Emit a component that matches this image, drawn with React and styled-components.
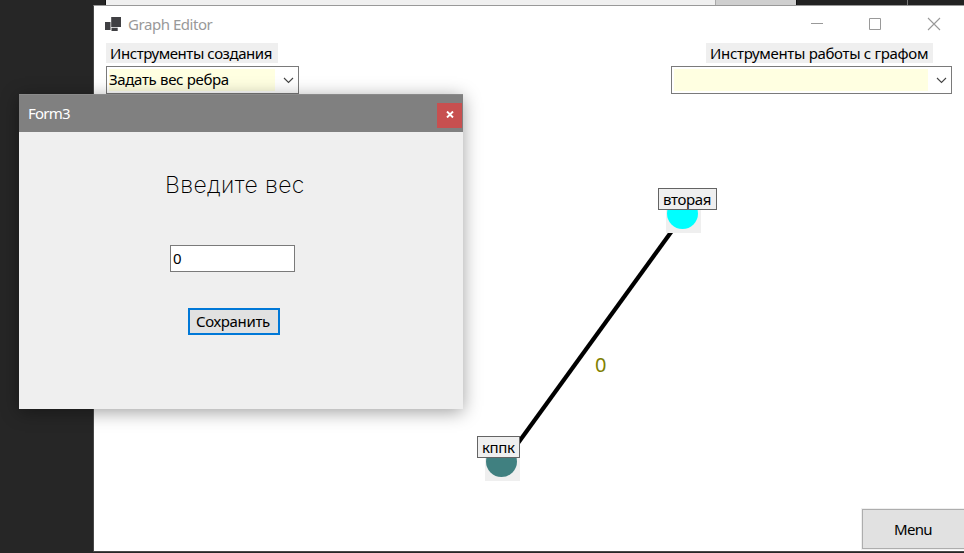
import React from 'react';
import styled, { createGlobalStyle } from 'styled-components';

const Global = createGlobalStyle`
  * { box-sizing: border-box; }
  html, body { margin: 0; overflow: hidden; background: #262626; }
  body, button, input { font-family: 'Noto Sans', 'Open Sans', sans-serif; font-size: 15px; }
`;

const Desktop = styled.div`
  position: relative;
  width: 964px;
  height: 553px;
  overflow: hidden;
  background: #262626;
`;

const BackStrip = styled.div`
  display: flex;
  height: 5px;
  padding-left: 105px;
`;

const StripPart = styled.div`
  width: ${(p) => p.$w}px;
  background: ${(p) => p.$bg};
  border-left: 1px solid ${(p) => p.$edge || p.$bg};
`;

const MainWindow = styled.main`
  position: absolute;
  left: 93px;
  top: 5px;
  width: 880px;
  height: 547px;
  display: flex;
  flex-direction: column;
  background: #fff;
  border: 1px solid #484848;
  border-top-color: #999;
`;

const TitleBar = styled.header`
  display: flex;
  align-items: center;
  height: 37px;
  width: 870px;
  padding-left: 11px;
`;

const Label = styled.span`
  display: block;
  white-space: pre;
  line-height: 20px;
  font-size: ${(p) => p.$size || 15}px;
  letter-spacing: ${(p) => p.$ls || 0}px;
  color: ${(p) => p.$color || '#000'};
`;

const AppTitle = styled(Label)`
  margin: 0 0 2px 7px;
  flex: 1;
`;

const WindowButtons = styled.div`
  display: flex;
  gap: 45px;
  margin: 0 23px 1px 0;
  svg { display: block; }
`;

const ToolRow = styled.div`
  display: flex;
  justify-content: space-between;
  width: 858px;
  padding-left: 12px;
`;

const ToolGroup = styled.section`
  display: flex;
  flex-direction: column;
  gap: 3px;
  width: ${(p) => p.$w}px;
`;

const Caption = styled.div`
  width: ${(p) => p.$w}px;
  height: 20px;
  margin-left: ${(p) => p.$indent || 0}px;
  padding-left: 4px;
  background: #efefef;
`;

const Combo = styled.div`
  display: flex;
  align-items: center;
  height: 28px;
  padding: 2px;
  border: 1px solid #7a7a7a;
`;

const ComboValue = styled.div`
  flex: 1;
  height: 22px;
  background: #ffffe1;
`;

const ComboArrow = styled.div`
  width: 21px;
  padding-left: 8px;
  svg { display: block; }
`;

const Canvas = styled.section`
  position: relative;
  flex: 1;
`;

const Edge = styled.svg`
  position: absolute;
  left: 0;
  top: 0;
`;

const Weight = styled.div`
  position: absolute;
  left: 501px;
  top: 261px;
`;

const Node = styled.div`
  position: absolute;
  left: ${(p) => p.$x}px;
  top: ${(p) => p.$y}px;
`;

const NodeName = styled.div`
  position: relative;
  z-index: 1;
  width: ${(p) => p.$w}px;
  height: 22px;
  padding-left: 4px;
  background: #efefef;
  border: 1px solid #646464;
`;

const NodeBody = styled.div`
  width: 35px;
  height: 35px;
  margin: -12px 0 0 8px;
  background: #efefef;
  &::before {
    content: '';
    display: block;
    width: 31px;
    height: 31px;
    margin-left: 1px;
    border-radius: 50%;
    background: ${(p) => p.$color};
  }
`;

const MenuButton = styled.button`
  position: absolute;
  left: 768px;
  bottom: 2px;
  width: 110px;
  height: 40px;
  padding: 0 0 1px 31px;
  text-align: left;
  background: #e1e1e1;
  border: 1px solid #adadad;
  box-shadow: 0 0 0 1px #efefef;
`;

const Dialog = styled.section`
  position: absolute;
  left: 19px;
  top: 94px;
  width: 444px;
  height: 315px;
  background: #efefef;
  box-shadow: 0 3px 17px rgba(0, 0, 0, 0.38);
`;

const DialogBar = styled.header`
  display: flex;
  align-items: center;
  justify-content: space-between;
  height: 38px;
  padding: 0 1px 2px 9px;
  background: #808080;
  border-top: 1px solid #8a8a8a;
`;

const CloseButton = styled.button`
  display: flex;
  align-items: center;
  justify-content: center;
  width: 25px;
  height: 25px;
  margin-top: 5px;
  padding: 0 0 1px;
  border: 0;
  background: #c75050;
`;

const DialogBody = styled.div`
  display: flex;
  flex-direction: column;
  align-items: flex-start;
`;

const Heading = styled.h1`
  margin: 38px 0 0 146px;
  height: 30px;
  white-space: pre;
  font: 200 23px/30px Inter, 'Noto Sans', sans-serif;
  letter-spacing: ${(p) => p.$ls}px;
  color: #000;
`;

const WeightInput = styled.input`
  width: 125px;
  height: 27px;
  margin: 45px 0 0 151px;
  padding: 0 2px 2px;
  border: 1px solid #7a7a7a;
  border-radius: 0;
  background: #fff;
  outline: 0;
`;

const SaveButton = styled.button`
  width: 92px;
  height: 27px;
  margin: 36px 0 0 169px;
  padding: 0 0 2px 6px;
  text-align: left;
  background: #e1e1e1;
  border: 2px solid #0078d7;
`;

const AppIcon = () => (
  <svg width="16" height="15" viewBox="0 0 16 15">
    <path d="M6.200 0H16v10H6.200z M0 5h5.500v8H0z M6.500 10.800h6.200V14H6.500z" fill="#404043" />
  </svg>
);

const Chevron = () => (
  <svg width="11" height="7" viewBox="0 0 11 7">
    <path d="M1 1l4.500 4.500L10 1" fill="none" stroke="#444" strokeWidth="1.100" />
  </svg>
);

const Controls = () => (
  <WindowButtons>
    <svg width="14" height="14"><path d="M2 6.500h12" stroke="#999" /></svg>
    <svg width="14" height="14"><path d="M1.500 1.500h11v11h-11z" fill="none" stroke="#999" /></svg>
    <svg width="14" height="14"><path d="M1 1l12 12M13 1L1 13" stroke="#999" strokeWidth="1.100" /></svg>
  </WindowButtons>
);

export default function App() {
  return (
    <>
      <Global />
      <Desktop>
        <BackStrip>
          <StripPart $w={610} $bg="#f0f0f0" $edge="#111" />
          <StripPart $w={81} $bg="#cfcfcf" $edge="#aaa" />
          <StripPart $w={111} $bg="#222" $edge="#111" />
          <StripPart $w={57} $bg="#222" $edge="#777" />
        </BackStrip>
        <MainWindow>
          <TitleBar>
            <AppIcon />
            <AppTitle $color="#999" $ls={-0.45}>Graph Editor</AppTitle>
            <Controls />
          </TitleBar>
          <ToolRow>
            <ToolGroup $w={193}>
              <Caption $w={172}><Label $ls={-0.43}>Инструменты создания</Label></Caption>
              <Combo>
                <ComboValue><Label $ls={-0.33}>Задать вес ребра</Label></ComboValue>
                <ComboArrow><Chevron /></ComboArrow>
              </Combo>
            </ToolGroup>
            <ToolGroup $w={281}>
              <Caption $w={227} $indent={35}><Label $ls={-0.32}>Инструменты работы с графом</Label></Caption>
              <Combo>
                <ComboValue />
                <ComboArrow><Chevron /></ComboArrow>
              </Combo>
            </ToolGroup>
          </ToolRow>
          <Canvas>
            <Edge width="870" height="457">
              <path d="M589.500 121L421 353.200" stroke="#000" strokeWidth="4.200" />
            </Edge>
            <Weight><Label $size={20} $color="#808000">0</Label></Weight>
            <Node $x={564} $y={94}>
              <NodeName $w={59}><Label $ls={-0.35}>вторая</Label></NodeName>
              <NodeBody $color="#00ffff" />
            </Node>
            <Node $x={383} $y={342}>
              <NodeName $w={43}><Label $ls={-0.4}>кппк</Label></NodeName>
              <NodeBody $color="#408080" />
            </Node>
            <MenuButton><Label $ls={-0.7}>Menu</Label></MenuButton>
          </Canvas>
        </MainWindow>
        <Dialog>
          <DialogBar>
            <Label $color="#fff" $ls={-0.75}>Form3</Label>
            <CloseButton aria-label="Close">
              <svg width="8" height="7" viewBox="0 0 8 7"><path d="M1 .5l6 6M7 .5l-6 6" stroke="#fff" strokeWidth="1.900" /></svg>
            </CloseButton>
          </DialogBar>
          <DialogBody>
            <Heading $ls={0.4}>Введите вес</Heading>
            <WeightInput defaultValue="0" />
            <SaveButton><Label $ls={-0.35}>Сохранить</Label></SaveButton>
          </DialogBody>
        </Dialog>
      </Desktop>
    </>
  );
}
